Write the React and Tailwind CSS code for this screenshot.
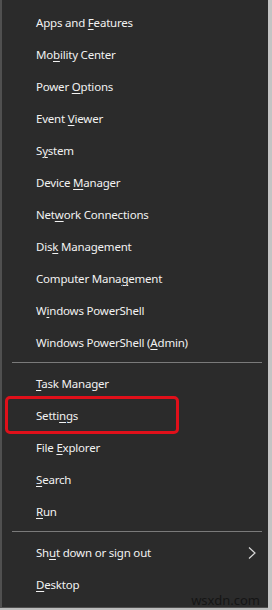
import React from 'react';

const groups = [
  [
    ['Apps and ', 'F', 'eatures'],
    ['Mo', 'b', 'ility Center'],
    ['Power ', 'O', 'ptions'],
    ['Event ', 'V', 'iewer'],
    ['S', 'y', 'stem'],
    ['Device ', 'M', 'anager'],
    ['Net', 'w', 'ork Connections'],
    ['Dis', 'k', ' Management'],
    ['Computer Mana', 'g', 'ement'],
    ['W', 'i', 'ndows PowerShell'],
    ['Windows PowerShell (', 'A', 'dmin)'],
  ],
  [
    ['', 'T', 'ask Manager'],
    ['Setti', 'n', 'gs'],
    ['File ', 'E', 'xplorer'],
    ['', 'S', 'earch'],
    ['', 'R', 'un'],
  ],
  [
    ['Sh', 'u', 't down or sign out', true],
    ['', 'D', 'esktop'],
  ],
];

function Item({ pre, key_, post, sub }) {
  return (
    <div className="h-8 flex items-center justify-between pt-px pl-[34px] pr-[12px] text-[11.5px] tracking-[-0.2px] text-[#f2f2f2]">
      <span>
        {pre}
        <span className="underline underline-offset-2 decoration-1">{key_}</span>
        {post}
      </span>
      {sub && (
        <svg width="8" height="12" viewBox="0 0 8 12" fill="none">
          <path d="M1 0.5 L7 6 L1 11.5" stroke="#d8d8d8" strokeWidth="1.2" />
        </svg>
      )}
    </div>
  );
}

export default function App() {
  return (
    <div
      className="relative w-[272px] h-[610px] flex bg-[#bdbdbd]"
      style={{ fontFamily: '"Segoe UI", "Noto Sans", sans-serif' }}
    >
      <div className="w-[268px] h-[608px] bg-[#2b2b2b] border-l-2 border-b border-[#505050] pt-[6px]">
        {groups.map((g, gi) => (
          <div key={gi}>
            {gi > 0 && (
              <div className="h-[9px] flex items-center pl-[10px] pr-[6px]">
                <div className="h-px w-full bg-[#7a7a7a]" />
              </div>
            )}
            {g.map(([pre, k, post, sub]) => (
              <Item key={pre + k + post} pre={pre} key_={k} post={post} sub={sub} />
            ))}
          </div>
        ))}
      </div>
      <div className="flex-1 bg-[#c4c4c4]" />

      {/* red highlight box */}
      <div className="absolute left-[5px] top-[396px] w-[174px] h-[38px] border-[3px] border-[#e0101a] rounded-[5px]" />

      {/* watermark */}
      <div className="absolute right-[12px] bottom-[3px] text-[13px] text-[#151515] leading-none">wsxdn.com</div>
    </div>
  );
}
